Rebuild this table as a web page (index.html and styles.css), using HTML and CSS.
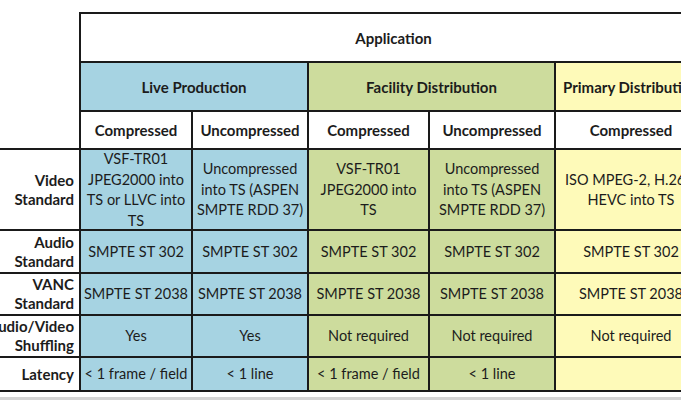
FILE: index.html
```html
<!DOCTYPE html>
<html>
<head>
<meta charset="utf-8">
<link rel="stylesheet" href="styles.css">
</head>
<body>
<div class="frame">
  <div class="grid">
    <div class="corner c1"></div>
    <div class="cell head app">Application</div>

    <div class="corner c2"></div>
    <div class="cell head blue span2">Live Production</div>
    <div class="cell head green span2">Facility Distribution</div>
    <div class="cell head yellow">Primary Distribution</div>

    <div class="corner c3"></div>
    <div class="cell head">Compressed</div>
    <div class="cell head">Uncompressed</div>
    <div class="cell head">Compressed</div>
    <div class="cell head">Uncompressed</div>
    <div class="cell head">Compressed</div>

    <div class="rowhead">Video<br>Standard</div>
    <div class="cell blue">VSF-TR01<br>JPEG2000 into<br>TS or LLVC into<br>TS</div>
    <div class="cell blue">Uncompressed<br>into TS (ASPEN<br>SMPTE RDD 37)</div>
    <div class="cell green">VSF-TR01<br>JPEG2000 into<br>TS</div>
    <div class="cell green">Uncompressed<br>into TS (ASPEN<br>SMPTE RDD 37)</div>
    <div class="cell yellow">ISO MPEG-2, H.264,<br>HEVC into TS</div>

    <div class="rowhead">Audio<br>Standard</div>
    <div class="cell blue">SMPTE ST 302</div>
    <div class="cell blue">SMPTE ST 302</div>
    <div class="cell green">SMPTE ST 302</div>
    <div class="cell green">SMPTE ST 302</div>
    <div class="cell yellow">SMPTE ST 302</div>

    <div class="rowhead">VANC<br>Standard</div>
    <div class="cell blue">SMPTE ST 2038</div>
    <div class="cell blue">SMPTE ST 2038</div>
    <div class="cell green">SMPTE ST 2038</div>
    <div class="cell green">SMPTE ST 2038</div>
    <div class="cell yellow">SMPTE ST 2038</div>

    <div class="rowhead">Audio/Video<br>Shuffling</div>
    <div class="cell blue">Yes</div>
    <div class="cell blue">Yes</div>
    <div class="cell green">Not required</div>
    <div class="cell green">Not required</div>
    <div class="cell yellow">Not required</div>

    <div class="rowhead last">Latency</div>
    <div class="cell blue last">&lt; 1 frame / field</div>
    <div class="cell blue last">&lt; 1 line</div>
    <div class="cell green last">&lt; 1 frame / field</div>
    <div class="cell green last">&lt; 1 line</div>
    <div class="cell yellow last"></div>
  </div>
  <div class="shade"></div>
</div>
</body>
</html>
```

FILE: styles.css
```css
html, body {
  margin: 0;
  padding: 0;
  overflow: hidden;
  background: #ffffff;
}

.frame {
  width: 681px;
  height: 400px;
  overflow: hidden;
  padding-top: 12px;
  box-sizing: border-box;
  font-family: "Lato", "Liberation Sans", sans-serif;
  color: #1c1c1c;
}

.grid {
  display: grid;
  margin-left: -20px;
  width: max-content;
  grid-template-columns: 99px 112px 116px 121px 126px 152px;
  grid-template-rows: 49px 49px 38px 81px 43px 42px 42px 36px;
}

.corner { grid-column: 1; }

.cell {
  box-sizing: border-box;
  border-left: 2px solid #1a1a1a;
  border-top: 2px solid #1a1a1a;
  display: flex;
  align-items: center;
  justify-content: center;
  text-align: center;
  font-size: 14.5px;
  line-height: 20.5px;
  white-space: nowrap;
  padding-top: 1px;
}

.head {
  font-weight: bold;
  font-size: 15px;
}

.app {
  grid-column: 2 / 7;
}

.span2 {
  grid-column: span 2;
}

.rowhead {
  box-sizing: border-box;
  border-top: 2px solid #1a1a1a;
  display: flex;
  align-items: center;
  justify-content: flex-end;
  text-align: right;
  padding-right: 5px;
  font-weight: bold;
  font-size: 15px;
  line-height: 19px;
  white-space: nowrap;
}

.last {
  border-bottom: 2px solid #1a1a1a;
}

.blue { background: #a6d3e2; }
.green { background: #cddc9d; }
.yellow { background: #fefab9; }

.shade {
  margin-top: 5px;
  height: 3px;
  background: #d4d4d4;
}
```
